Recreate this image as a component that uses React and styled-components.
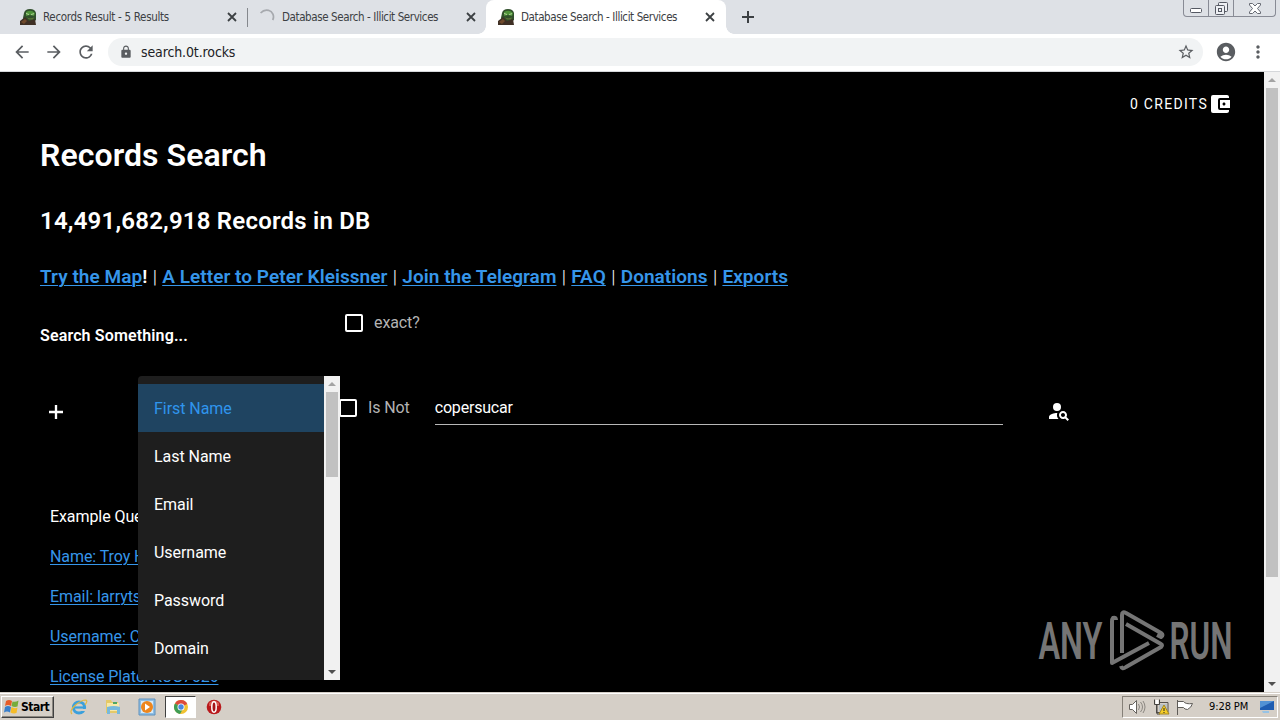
import React from "react";
import styled, { createGlobalStyle } from "styled-components";
import {
  MdArrowBack, MdArrowForward, MdRefresh, MdLock, MdStarBorder, MdAccountCircle,
  MdMoreVert, MdAccountBalanceWallet, MdPersonSearch,
} from "react-icons/md";

const Global = createGlobalStyle`
  * { box-sizing: border-box; }
  body { margin: 0; overflow: hidden; background: #000; }
  svg { display: block; flex: none; }
`;
const ui = `"DejaVu Sans Condensed", "DejaVu Sans", sans-serif`;

const Desktop = styled.div`
  width: 1280px; height: 720px; display: flex; flex-direction: column; overflow: hidden;
  font-family: Roboto, sans-serif;
`;
const TabStrip = styled.div`
  height: 34px; flex: none; display: flex; background: #dee1e6; padding-left: 8px;
`;
const Tab = styled.div`
  width: ${(p) => (p.$active ? 240 : 239)}px; height: 34px; display: flex; align-items: center;
  padding: 0 ${(p) => (p.$active ? 11 : 10)}px 0 12px;
  background: ${(p) => (p.$active ? "#fff" : "transparent")};
  border-radius: 8px 8px 0 0; position: relative;
  font: 11.5px ${ui}; color: #3c4043;
`;
const Divider = styled.div`
  position: absolute; right: -1px; top: 8px; width: 1px; height: 19px; background: #85888d;
`;
const Foot = styled.i`
  position: absolute; bottom: 0; width: 8px; height: 8px;
  ${(p) => (p.$side === "left" ? "left: -8px" : "right: -8px")};
  background: radial-gradient(circle at ${(p) => (p.$side === "left" ? "0 0" : "8px 0")}, #dee1e6 7.5px, #fff 8px);
`;
const TabTitle = styled.span`
  margin-left: 7px; flex: 1; white-space: nowrap; letter-spacing: ${(p) => p.$track}px;
`;
const NewTab = styled.div`
  width: 44px; display: flex; align-items: center; justify-content: center; color: #3c4043;
`;
const WindowButtons = styled.div`
  margin-left: auto; margin-right: 4px; height: 17px; display: flex;
  border: 1px solid #888b95; border-top: 0; border-radius: 0 0 4px 4px;
`;
const WindowButton = styled.div`
  width: ${(p) => p.$w}px; display: flex; align-items: center; justify-content: center;
  & + & { border-left: 1px solid #888b95; }
`;
const Toolbar = styled.div`
  height: 38px; flex: none; display: flex; align-items: center; background: #fff;
  border-bottom: 1px solid #d5d7da; padding: 0 10px 1px 12px; color: #5a5d61;
`;
const NavIcon = styled.div`
  width: 20px; margin-right: 12px; display: flex; justify-content: center;
`;
const Omnibox = styled.div`
  width: 1095px; height: 28px; border-radius: 14px; background: #f1f3f4; display: flex; align-items: center;
  padding: 0 8px 0 11px; font: 14px ${ui}; color: #202124;
`;
const Url = styled.span`
  margin-left: 8px; flex: 1; letter-spacing: -0.12px;
`;
const Profile = styled.div`
  margin-left: 12px; margin-right: 11px;
`;
const Viewport = styled.div`
  height: 620px; flex: none; display: flex; background: #000; position: relative;
`;
const Page = styled.main`
  flex: 1; height: 620px; overflow: hidden; padding: 22px 32px 0 40px; color: #fff;
`;
const Credits = styled.div`
  height: 20px; display: flex; align-items: center; justify-content: flex-end;
  font-size: 14px; letter-spacing: 1.3px; font-weight: 400;
`;
const Title = styled.h1`
  margin: 22px 0 0; font-size: 32px; line-height: 38px; font-weight: 600; letter-spacing: 0.08px;
`;
const Count = styled.h2`
  margin: 33px 0 0; font-size: 24px; line-height: 28px; font-weight: 600; letter-spacing: 0.21px;
`;
const Links = styled.h3`
  margin: 30px 0 0; font-size: 19px; line-height: 24px; font-weight: 600; white-space: nowrap;
  letter-spacing: 0.05px;
`;
const Pipe = styled.span`font-weight: 300; margin: 0 0.45px 0 0.6px;`;
const Link = styled.a`
  color: #3696ea; text-decoration: underline; text-decoration-thickness: 1px; text-underline-offset: 2px;
`;
const ExactRow = styled.div`
  display: flex; margin-top: 22px; height: 40px;
`;
const Prompt = styled.div`
  width: 305px; padding-top: 15px; font-size: 16px; line-height: 20px; font-weight: 600; letter-spacing: 0.14px;
`;
const CheckLabel = styled.label`
  display: flex; align-items: center; gap: 11px; height: 24px; color: #b3b3b3; font-size: 16px;
  margin-top: ${(p) => p.$drop || 0}px; letter-spacing: -0.1px;
`;
const CheckText = styled.span`padding-bottom: ${(p) => p.$lift || 0}px;`;
const Box = styled.span`
  width: 18px; height: 18px; border: 2px solid #fff; border-radius: 2px;
`;
const QueryRow = styled.div`
  display: flex; margin-top: 41px; height: 40px; align-items: flex-start;
`;
const AddButton = styled.div`
  width: 299px; padding: 13px 0 0 9px;
`;
const Field = styled.div`
  margin-left: 25px; width: 568px; height: 33px; border-bottom: 1px solid #b8b8b8;
  font-size: 16px; line-height: 31px; letter-spacing: -0.2px;
`;
const SearchButton = styled.div`margin: 7px 0 0 44px;`;
const Examples = styled.div`
  margin: 75px 0 0 10px; display: flex; flex-direction: column; align-items: flex-start; gap: 20px;
  font-size: 16px; line-height: 20px; white-space: nowrap; letter-spacing: -0.08px;
`;
const Scroll = styled.div`
  width: 16px; height: ${(p) => p.$h}px; flex: none; background: #f1f1f1;
  display: flex; flex-direction: column; align-items: center;
`;
const Arrow = styled.div`
  width: 16px; height: 16px; display: flex; align-items: center; justify-content: center;
  &::after {
    content: ""; border: 4px solid transparent; border-width: ${(p) => (p.$down ? "4px 4px 0" : "0 4px 4px")};
    ${(p) => (p.$down ? "border-top-color: #505050" : "border-bottom-color: #a3a3a3")};
  }
`;
const Thumb = styled.div`
  width: 12px; height: ${(p) => p.$h}px; background: #c1c1c1; margin-bottom: auto;
`;
const Menu = styled.div`
  position: absolute; left: 138px; top: 304px; width: 202px; height: 304px; display: flex;
  background: #1e1e1e; border-radius: 4px 0 0 4px; overflow: hidden;
`;
const MenuList = styled.div`flex: 1; padding-top: 8px;`;
const MenuItem = styled.div`
  height: 48px; padding-left: 16px; line-height: 49px; font-size: 16px; letter-spacing: -0.05px;
  color: ${(p) => (p.$selected ? "#2f95ed" : "#fff")};
  background: ${(p) => (p.$selected ? "#1f4461" : "transparent")};
`;
const Watermark = styled.svg`position: absolute; left: 1036px; top: 535px; overflow: visible;`;
const Taskbar = styled.div`
  height: 28px; flex: none; background: #d5cfc7; border-top: 1px solid #d5cfc7; box-shadow: inset 0 1px #fff;
  display: flex; align-items: center; padding: 2px 2px 2px 1px; font-family: ${ui};
`;
const Start = styled.div`
  width: 53px; height: 22px; display: flex; align-items: center; gap: 1px; padding-left: 1px;
  border: 1px solid; border-color: #fff #404040 #404040 #fff; box-shadow: inset -1px -1px #8b8780;
  font-size: 12px; font-weight: 700; letter-spacing: -0.5px; color: #000;
`;
const Launch = styled.div`
  width: ${(p) => (p.$open ? 31 : 34)}px; height: 22px; display: flex; align-items: center; justify-content: center;
  margin: ${(p) => (p.$open ? "0 1px" : "0")};
  ${(p) => p.$open && "background: #fff; border: 1px solid; border-color: #404040 #fff #fff #404040;"}
`;
const LaunchBar = styled.div`display: flex; margin-left: 8px;`;
const Tray = styled.div`
  margin-left: auto; width: 156px; height: 22px; display: flex; align-items: center; padding-left: 5px;
  border: 1px solid; border-color: #858078 #fff #fff #858078;
`;
const Clock = styled.span`
  font-size: 11px; letter-spacing: -0.1px; color: #000; margin: 0 11px 0 15px; white-space: nowrap;
`;

const Favicon = () => (
  <svg width="16" height="16" viewBox="0 0 16 16">
    <path d="M4 4Q5 0 10 0q5 0 6 4v7l-4 3H5L3 9z" fill="#31502c" />
    <path d="M6 3q5-3 9 1l-1 3-4-1-4 1z" fill="#4e9239" />
    <path d="M6 4.5l3 1M11 5.5l3-.8" stroke="#b5d69b" strokeWidth="1" />
    <path d="M7 8.5q3 1.5 7 0l-1 2H9z" fill="#5c7536" />
    <path d="M0 12l5-4 4 4 6-2 1 6H0z" fill="#3f3025" />
    <path d="M1 13l4-3 2 2-3 3z" fill="#704a2c" />
  </svg>
);
const Spinner = () => (
  <svg width="16" height="16" viewBox="0 0 16 16" fill="none" stroke="#a6a9ae" strokeWidth="1.7">
    <path d="M1.6 4Q5 .2 9.5 1.3A6.8 6.8 0 0 1 13.7 11" />
  </svg>
);
const Cross = () => (
  <svg width="10" height="10" viewBox="0 0 10 10" stroke="currentColor" strokeWidth="1.8">
    <path d="M1 1l8 8M9 1l-8 8" />
  </svg>
);
const Plus = ({ size }) => (
  <svg width={size} height={size} viewBox="0 0 12 12" stroke="currentColor" strokeWidth="2">
    <path d="M6 0v12M0 6h12" />
  </svg>
);
const tabs = [
  { title: "Records Result - 5 Results", icon: <Favicon />, track: -0.3 },
  { title: "Database Search - Illicit Services", icon: <Spinner />, track: -0.4 },
  { title: "Database Search - Illicit Services", icon: <Favicon />, track: -0.4, active: true },
];
const options = ["First Name", "Last Name", "Email", "Username", "Password", "Domain"];
const examples = ["Name: Troy Hunt", "Email: larrytsg", "Username: Chad", "License Plate: KCG7526"];

const BrowserTab = ({ tab, divided }) => (
  <Tab $active={tab.active}>
    {tab.active && <><Foot $side="left" /><Foot $side="right" /></>}
    {tab.icon}
    <TabTitle $track={tab.track}>{tab.title}</TabTitle>
    <Cross />
    {divided && <Divider />}
  </Tab>
);

const WindowsLogo = () => (
  <svg width="17" height="16" viewBox="0 0 17 16">
    <path d="M3 2q3-2 6 0L8 7Q5 5 2 7z" fill="#e75b27" />
    <path d="M9.500 2.500q3 1 6-1l-1 6q-3 1-6-.5z" fill="#76ac3c" />
    <path d="M2 8q3-2 6 0l-1 5.500q-3-2-6 0z" fill="#397fcb" />
    <path d="M8.500 8q3 2 6 .5l-1 5.500q-3 1-6-.5z" fill="#f5bc29" />
  </svg>
);
const Explorer = () => (
  <svg width="18" height="18" viewBox="0 0 18 18" fill="none">
    <circle cx="9" cy="9.5" r="5.6" stroke="#3ba0dc" strokeWidth="3" />
    <path d="M5 9.5h9" stroke="#3ba0dc" strokeWidth="2.2" />
    <path d="M11 12h6" stroke="#d5cfc7" strokeWidth="2" />
    <path d="M2 16Q-1 13 5 7.500T16 2q2 1-1 5" stroke="#e2b83f" strokeWidth="1.2" />
  </svg>
);
const Folder = () => (
  <svg width="18" height="18" viewBox="0 0 18 18">
    <path d="M2 2h5l1 2h6v11H2z" fill="#e5c967" />
    <path d="M3 5h12v8H3z" fill="#f7e9a8" />
    <path d="M9 4h4v2H9z" fill="#4fa765" />
    <path d="M3 9q7-2 13 0v7h-3v-4H6v4H3z" fill="#77b9dc" />
  </svg>
);
const Player = () => (
  <svg width="18" height="18" viewBox="0 0 18 18">
    <path d="M1 1h16v16H1z" fill="#8ebfe5" stroke="#5f91bd" />
    <path d="M3 3h12v12H3z" fill="#d8eaf7" />
    <circle cx="9" cy="9" r="6" fill="#ed861d" />
    <path d="M7 5.500l5 3.500-5 3.500z" fill="#fff" />
  </svg>
);
const Chrome = () => (
  <svg width="16" height="16" viewBox="0 0 16 16">
    <circle cx="8" cy="8" r="7" fill="#f1c232" />
    <path d="M8 8L2 4.400A7 7 0 0 1 14.200 5z" fill="#dd4b3c" />
    <path d="M8 8L2 4.400A7 7 0 0 0 7 15l3.500-6z" fill="#3f9d55" />
    <circle cx="8" cy="8" r="3.500" fill="#fff" /><circle cx="8" cy="8" r="2.700" fill="#4b88df" />
  </svg>
);
const Opera = () => (
  <svg width="16" height="16" viewBox="0 0 16 16">
    <circle cx="8" cy="8" r="7.300" fill="#b9191c" /><path d="M3 4q5-5 10 0v3H3z" fill="#d7574f" />
    <ellipse cx="8" cy="8" rx="2.200" ry="5.200" fill="#a41518" stroke="#fff" strokeWidth="1.500" />
  </svg>
);
const TrayIcons = () => (
  <svg width="66" height="18" viewBox="0 0 66 18" fill="none">
    <path d="M1.500 6.500h3l4-4v13l-4-4h-3z" fill="#fff" stroke="#66635e" />
    <path d="M10.500 6q2 3 0 6M12.500 4q4 5 0 10M15 3q4 6 0 12" stroke="#77746f" strokeWidth=".8" />
    <path d="M31 4.500h9v10H28M28.500 7v8" stroke="#56534e" />
    <path d="M31 6h8v7h-8z" fill="#b8c0c4" />
    <path d="M26.500 1.500v5h5v-5M29 7v9h3" stroke="#44423f" />
    <path d="M27.500 2h3v4h-3z" fill="#fff" />
    <path d="M36 7l5 9H31z" fill="#f6ce28" stroke="#a48620" /><path d="M36 10v3M36 14v1" stroke="#222" />
    <path d="M49.500 2v15M49.500 3.500h6q2 3 9 2-1 4-5 6-3 0-4-2h-6" fill="#fff" stroke="#5f5c58" />
  </svg>
);

export default function App() {
  return (
    <Desktop>
      <Global />
      <TabStrip>
        {tabs.map((t, i) => <BrowserTab key={i} tab={t} divided={i === 0} />)}
        <NewTab><Plus size={12} /></NewTab>
        <WindowButtons>
          <WindowButton $w={24}>
            <svg width="13" height="16"><rect x=".5" y="8.500" width="11" height="4" rx="1" fill="#fff" stroke="#555963" /></svg>
          </WindowButton>
          <WindowButton $w={25}>
            <svg width="13" height="16" fill="#eef0f4" stroke="#555963">
              <rect x="3.500" y="2.500" width="9" height="9" rx="1" /><rect x=".5" y="5.500" width="9" height="9" rx="1" />
              <rect x="3.500" y="8.500" width="3" height="3" />
            </svg>
          </WindowButton>
          <WindowButton $w={42}>
            <svg width="12" height="14"><path d="M.5 2.500h3L6 5l2.500-2.500h3v1.500L8.500 7.500l3 3.500v1.500h-3L6 10l-2.500 2.500h-3V11l3-3.500-3-3.500z" fill="#fff" stroke="#666a73" /></svg>
          </WindowButton>
        </WindowButtons>
      </TabStrip>
      <Toolbar>
        <NavIcon><MdArrowBack size={20} /></NavIcon>
        <NavIcon><MdArrowForward size={20} /></NavIcon>
        <NavIcon><MdRefresh size={20} /></NavIcon>
        <Omnibox><MdLock size={14} color="#5a5d61" /><Url>search.0t.rocks</Url><MdStarBorder size={18} color="#5a5d61" /></Omnibox>
        <Profile><MdAccountCircle size={22} /></Profile>
        <MdMoreVert size={20} />
      </Toolbar>
      <Viewport>
        <Page>
          <Credits>0 CREDITS<MdAccountBalanceWallet size={24} /></Credits>
          <Title>Records Search</Title>
          <Count>14,491,682,918 Records in DB</Count>
          <Links>
            <Link>Try the Map</Link>! <Pipe>|</Pipe> <Link>A Letter to Peter Kleissner</Link> <Pipe>|</Pipe>{" "}
            <Link>Join the Telegram</Link> <Pipe>|</Pipe> <Link>FAQ</Link> <Pipe>|</Pipe>{" "}
            <Link>Donations</Link> <Pipe>|</Pipe> <Link>Exports</Link>
          </Links>
          <ExactRow>
            <Prompt>Search Something...</Prompt>
            <CheckLabel><Box /><CheckText $lift={2}>exact?</CheckText></CheckLabel>
          </ExactRow>
          <QueryRow>
            <AddButton><Plus size={14} /></AddButton>
            <CheckLabel $drop={4}><Box /><CheckText $lift={1}>Is Not</CheckText></CheckLabel>
            <Field>copersucar</Field>
            <SearchButton><MdPersonSearch size={24} /></SearchButton>
          </QueryRow>
          <Examples>
            <span>Example Queries</span>
            {examples.map((e) => <Link key={e}>{e}</Link>)}
          </Examples>
        </Page>
        <Scroll $h={620}><Arrow /><Thumb $h={489} /><Arrow $down /></Scroll>
        <Menu>
          <MenuList>
            {options.map((o, i) => <MenuItem key={o} $selected={i === 0}>{o}</MenuItem>)}
          </MenuList>
          <Scroll $h={304}><Arrow /><Thumb $h={85} /><Arrow $down /></Scroll>
        </Menu>
        <Watermark width="200" height="68" viewBox="1036 607 200 68">
          <g fill="#757575" fontFamily="Roboto, sans-serif" fontSize="52" fontWeight="600">
            <text x="1038.5" y="659" textLength="64" lengthAdjust="spacingAndGlyphs">ANY</text>
            <text x="1169.5" y="659" textLength="63" lengthAdjust="spacingAndGlyphs">RUN</text>
          </g>
          <g fill="none" stroke="#757575" strokeWidth="4" strokeLinejoin="round">
            <path d="M1116 620q0-3-3-2-1 1-1 4v41l37-20" />
            <path d="M1122 653v-38q0-4 4-2l35 20q3 2 0 4l-4-2" />
            <path d="M1126 624l35 20q2 1 0 3l-35 20q-4 3-5-1" />
          </g>
        </Watermark>
      </Viewport>
      <Taskbar>
        <Start><WindowsLogo />Start</Start>
        <LaunchBar>
          <Launch><Explorer /></Launch><Launch><Folder /></Launch><Launch><Player /></Launch>
          <Launch $open><Chrome /></Launch><Launch><Opera /></Launch>
        </LaunchBar>
        <Tray>
          <TrayIcons />
          <Clock>9:28 PM</Clock>
          <svg width="16" height="14"><path d="M1 1h14v9H1z" fill="#1f5db1" /><path d="M1 1h14L1 8z" fill="#5292d4" /><path d="M3 11h7v2H4z" fill="#97c3e5" /></svg>
        </Tray>
      </Taskbar>
    </Desktop>
  );
}
